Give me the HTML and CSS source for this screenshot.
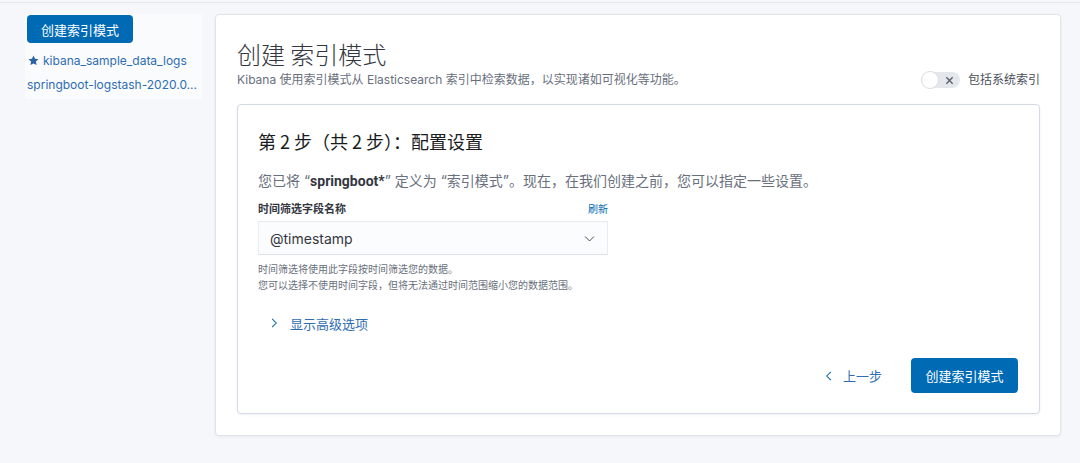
FILE: index.html
```html
<!DOCTYPE html>
<html lang="zh-CN">
<head>
<meta charset="utf-8">
<link rel="stylesheet" href="styles.css">
</head>
<body>
<div class="topbar"></div>
<div class="page">
  <aside class="sidebar">
    <button class="btn-primary btn-small">创建索引模式</button>
    <ul class="index-list">
      <li class="index-item">
        <svg class="star" viewBox="0 0 16 16" width="11" height="11"><path d="M8 .8l2.2 4.7 5.1.6-3.8 3.5 1 5.1L8 12.2 3.5 14.7l1-5.1L.7 6.1l5.1-.6z" fill="currentColor"/></svg>
        <span>kibana_sample_data_logs</span>
      </li>
      <li class="index-item">springboot-logstash-2020.0...</li>
    </ul>
  </aside>
  <main class="panel">
    <header class="panel-header">
      <div class="header-text">
        <h1 class="title">创建 索引模式</h1>
        <p class="subtitle">Kibana 使用索引模式从 Elasticsearch 索引中检索数据，以实现诸如可视化等功能。</p>
      </div>
      <label class="switch">
        <span class="switch-track">
          <span class="switch-knob"></span>
          <svg class="switch-x" viewBox="0 0 10 10" width="9" height="9"><path d="M1.5 1.5l7 7M8.5 1.5l-7 7" stroke="#5a606b" stroke-width="1.5" fill="none"/></svg>
        </span>
        <span class="switch-label">包括系统索引</span>
      </label>
    </header>
    <section class="step">
      <h2 class="step-title">第 2 步（共 2 步）：配置设置</h2>
      <p class="step-desc">您已将 “<b>springboot*</b>” 定义为 “索引模式”。现在，在我们创建之前，您可以指定一些设置。</p>
      <div class="form-row">
        <div class="form-label-row">
          <span class="form-label">时间筛选字段名称</span>
          <a class="refresh">刷新</a>
        </div>
        <div class="select">
          <span>@timestamp</span>
          <svg viewBox="0 0 16 16" width="13" height="13"><path d="M2.5 5.5L8 11l5.5-5.5" stroke="#343741" stroke-width="1.1" fill="none"/></svg>
        </div>
        <div class="help">
          <div>时间筛选将使用此字段按时间筛选您的数据。</div>
          <div>您可以选择不使用时间字段，但将无法通过时间范围缩小您的数据范围。</div>
        </div>
      </div>
      <a class="advanced">
        <svg viewBox="0 0 16 16" width="12" height="12"><path d="M5.5 2.5L11 8l-5.5 5.5" stroke="#006bb4" stroke-width="1.4" fill="none"/></svg>
        <span>显示高级选项</span>
      </a>
      <div class="actions">
        <a class="back">
          <svg viewBox="0 0 16 16" width="12" height="12"><path d="M10.5 2.5L5 8l5.5 5.5" stroke="#006bb4" stroke-width="1.4" fill="none"/></svg>
          <span>上一步</span>
        </a>
        <button class="btn-primary btn-create">创建索引模式</button>
      </div>
    </section>
  </main>
</div>
</body>
</html>
```

FILE: styles.css
```css
* { box-sizing: border-box; }
html, body { margin: 0; padding: 0; }
body {
  background: #f5f7fa;
  font-family: Inter, "Noto Sans CJK SC", "Noto Sans", sans-serif;
  color: #343741;
  width: 1080px;
  height: 463px;
  overflow: hidden;
}
.topbar {
  height: 3px;
  border-bottom: 1px solid #e3e7ee;
  background: #f5f7fa;
}
.page {
  display: flex;
  align-items: flex-start;
  padding: 11px 19px 0 25px;
  gap: 13px;
}
.sidebar {
  width: 177px;
  flex: none;
  background: #fafbfd;
  padding: 1px 2px 3px 2px;
}
.btn-primary {
  background: #006bb4;
  color: #fff;
  border: none;
  border-radius: 4px;
  font-family: "Noto Sans CJK SC", sans-serif;
  cursor: pointer;
}
.btn-small {
  width: 106px;
  height: 28px;
  font-size: 13px;
  padding: 0;
}
.index-list {
  list-style: none;
  margin: 5px 0 0 0;
  padding: 0;
}
.index-item {
  display: flex;
  align-items: center;
  gap: 4px;
  height: 24px;
  font-size: 12px;
  color: #2e6db3;
  white-space: nowrap;
}
.star { color: #2a62a6; margin-left: 1px; }
.panel {
  width: 846px;
  flex: none;
  background: #fff;
  border: 1px solid #dfe4ec;
  border-radius: 4px;
  box-shadow: 0 1px 3px rgba(0,0,0,0.06);
  padding: 23px 20px 21px 21px;
}
.panel-header {
  display: flex;
  justify-content: space-between;
  align-items: flex-end;
}
.title {
  margin: 0;
  font-family: "Noto Sans CJK SC", sans-serif;
  font-weight: 300;
  font-size: 24px;
  line-height: 32px;
  color: #343741;
}
.subtitle {
  margin: 2px 0 0 0;
  font-size: 12px;
  line-height: 16px;
  color: #69707d;
}
.switch {
  display: flex;
  align-items: center;
  gap: 8px;
  margin-bottom: 0;
}
.switch-track {
  position: relative;
  display: flex;
  align-items: center;
  justify-content: flex-end;
  width: 38px;
  height: 16px;
  background: #e4e7ec;
  border-radius: 8px;
  padding-right: 6px;
}
.switch-knob {
  position: absolute;
  left: -1px;
  top: -1px;
  width: 18px;
  height: 18px;
  border-radius: 50%;
  background: #fff;
  border: 1px solid #d7dce4;
}
.switch-label {
  font-size: 12px;
  line-height: 16px;
  color: #4a4f5a;
}
.step {
  margin-top: 16px;
  border: 1px solid #d3dae6;
  border-radius: 4px;
  box-shadow: 0 1px 3px rgba(0,0,0,0.06);
  padding: 24px 21px 20px 20px;
}
.step-title {
  margin: 0;
  font-family: "Noto Sans CJK SC", sans-serif;
  font-weight: 400;
  font-size: 18px;
  line-height: 24px;
  color: #1a1c21;
}
.step-desc {
  margin: 18px 0 0 0;
  font-size: 14px;
  line-height: 20px;
  color: #69707d;
}
.step-desc b { color: #343741; font-weight: 700; font-family: Roboto, "Noto Sans CJK SC", sans-serif; }
.form-row { width: 350px; margin-top: 9px; }
.form-label-row {
  display: flex;
  justify-content: space-between;
  align-items: center;
  height: 16px;
}
.form-label {
  font-size: 11px;
  font-weight: 700;
  color: #343741;
}
.refresh {
  font-size: 10px;
  color: #006bb4;
}
.select {
  margin-top: 5px;
  height: 34px;
  background: #fbfcfd;
  border: 1px solid #e8ebf0;
  border-bottom-color: #dde2ea;
  display: flex;
  align-items: center;
  justify-content: space-between;
  padding: 0 11px 0 11px;
  font-size: 14px;
  color: #343741;
}
.help {
  margin-top: 6px;
  font-size: 10px;
  line-height: 16px;
  color: #69707d;
}
.advanced {
  margin-top: 20px;
  display: flex;
  align-items: center;
  gap: 10px;
  height: 20px;
  padding-left: 10px;
  font-size: 13px;
  color: #2e6db3;
}
.actions {
  margin-top: 25px;
  display: flex;
  justify-content: flex-end;
  align-items: center;
  gap: 29px;
}
.back {
  display: flex;
  align-items: center;
  gap: 8px;
  font-size: 13px;
  color: #2e6db3;
}
.btn-create {
  width: 107px;
  height: 35px;
  font-size: 13px;
  padding: 0;
}
```
